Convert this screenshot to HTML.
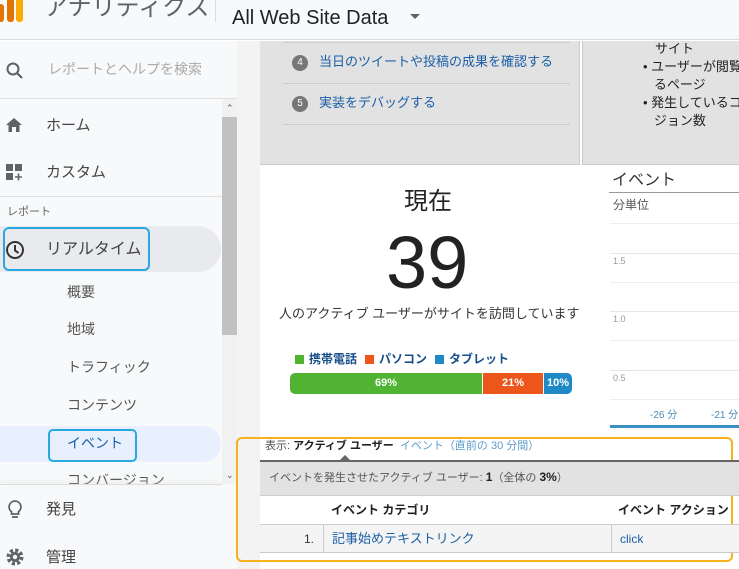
<!DOCTYPE html>
<html><head><meta charset="utf-8"><style>
*{margin:0;padding:0;box-sizing:border-box}
body{width:739px;height:569px;overflow:hidden;position:relative;background:#fff;font-family:"Liberation Sans","Noto Sans CJK JP",sans-serif;color:#333;line-height:1.2}
.a{position:absolute;white-space:nowrap}
.nav{font-size:15px;color:#444}
.sub{font-size:14px;color:#555}
.lk{color:#1a5ea8}
</style></head><body>
<div class="a" style="left:0;top:0;width:739px;height:40px;background:#f8f9fa;border-bottom:1px solid #dadce0"></div>
<div class="a" style="left:-2px;top:4px;width:6px;height:18px;background:#e37400;border-radius:3px"></div>
<div class="a" style="left:7px;top:-4px;width:7px;height:26px;background:#e37400;border-radius:3px"></div>
<div class="a" style="left:16px;top:-4px;width:7px;height:26px;background:#f9ab00;border-radius:3px"></div>
<div class="a" style="left:44px;top:-6px;font-size:24px;color:#5f6368">アナリティクス</div>
<div class="a" style="left:215px;top:0;width:1px;height:22px;background:#dadce0"></div>
<div class="a" style="left:232px;top:6px;font-size:20px;color:#202124">All Web Site Data</div>
<div class="a" style="left:410px;top:14px;width:0;height:0;border-left:5px solid transparent;border-right:5px solid transparent;border-top:5px solid #5f6368"></div>

<div class="a" style="left:0;top:41px;width:237px;height:528px;background:#f8f9fa"></div>
<svg class="a" style="left:5px;top:61px" width="20" height="20" viewBox="0 0 20 20"><circle cx="8" cy="8" r="5.5" fill="none" stroke="#5f6368" stroke-width="2"/><line x1="12" y1="12" x2="17" y2="17" stroke="#5f6368" stroke-width="2.2"/></svg>
<div class="a" style="left:48px;top:61px;font-size:14px;color:#aaa">レポートとヘルプを検索</div>
<div class="a" style="left:0;top:98px;width:237px;height:1px;background:#e0e0e0"></div>
<div class="a" style="left:222px;top:99px;width:15px;height:385px;background:#f1f1f1"></div>
<div class="a" style="left:222px;top:117px;width:15px;height:218px;background:#c1c1c1"></div>
<div class="a" style="left:226px;top:103px;font-size:9px;color:#555">&#8963;</div>
<div class="a" style="left:226px;top:470px;font-size:9px;color:#555">&#8964;</div>

<svg class="a" style="left:5px;top:117px" width="18" height="16" viewBox="0 0 18 16"><path d="M9 1 L1 8 H3.5 V15 H7 V10 H11 V15 H14.5 V8 H17 Z" fill="#5f6368"/></svg>
<div class="a nav" style="left:46px;top:117px">ホーム</div>
<svg class="a" style="left:6px;top:164px" width="18" height="18" viewBox="0 0 18 18"><rect x="0" y="0" width="7" height="7" fill="#5f6368"/><rect x="9" y="0" width="7" height="7" fill="#5f6368"/><rect x="0" y="9" width="7" height="7" fill="#5f6368"/><path d="M12.5 9.5v7M9 13h7" stroke="#5f6368" stroke-width="1.6"/></svg>
<div class="a nav" style="left:46px;top:164px">カスタム</div>
<div class="a" style="left:0;top:196px;width:222px;height:1px;background:#e0e0e0"></div>
<div class="a" style="left:7px;top:206px;font-size:11px;color:#666">レポート</div>
<div class="a" style="left:0;top:226px;width:221px;height:46px;background:#e8eaed;border-radius:0 23px 23px 0"></div>
<div class="a" style="left:3px;top:227px;width:147px;height:44px;border:2px solid #29a8e0;border-radius:6px"></div>
<svg class="a" style="left:5px;top:240px" width="20" height="20" viewBox="0 0 20 20"><circle cx="10" cy="10" r="8" fill="none" stroke="#333" stroke-width="2"/><path d="M10 5v5.5l3.5 2.5" fill="none" stroke="#333" stroke-width="2"/></svg>
<div class="a nav" style="left:46px;top:240px;font-size:16px">リアルタイム</div>
<div class="a sub" style="left:67px;top:284px">概要</div>
<div class="a sub" style="left:67px;top:321px">地域</div>
<div class="a sub" style="left:67px;top:359px">トラフィック</div>
<div class="a sub" style="left:67px;top:397px">コンテンツ</div>
<div class="a" style="left:0;top:426px;width:221px;height:36px;background:#e8f0fe;border-radius:0 18px 18px 0"></div>
<div class="a" style="left:48px;top:429px;width:89px;height:33px;border:2px solid #29a8e0;border-radius:5px"></div>
<div class="a sub" style="left:67px;top:435px;color:#1a5ea8">イベント</div>
<div class="a" style="left:0;top:462px;width:222px;height:22px;overflow:hidden"><div class="a sub" style="left:67px;top:10px">コンバージョン</div></div>
<div class="a" style="left:0;top:484px;width:222px;height:1px;background:#ddd;box-shadow:0 -2px 3px #ddd"></div>
<svg class="a" style="left:6px;top:499px" width="18" height="22" viewBox="0 0 18 22"><path d="M9 2a6 6 0 0 0-3.5 10.8V15h7v-2.2A6 6 0 0 0 9 2z" fill="none" stroke="#5f6368" stroke-width="1.8"/><path d="M6 18h6" stroke="#5f6368" stroke-width="1.8"/></svg>
<div class="a nav" style="left:46px;top:501px">発見</div>
<svg class="a" style="left:5px;top:547px" width="20" height="20" viewBox="0 0 20 20"><circle cx="10" cy="10" r="6.5" fill="none" stroke="#5f6368" stroke-width="4" stroke-dasharray="3 2.1"/><circle cx="10" cy="10" r="5" fill="#5f6368"/><circle cx="10" cy="10" r="2.2" fill="#f8f9fa"/></svg>
<div class="a nav" style="left:46px;top:549px">管理</div>

<div class="a" style="left:237px;top:41px;width:23px;height:528px;background:#f3f3f3"></div>
<div class="a" style="left:260px;top:41px;width:320px;height:124px;background:#e2e2e2;border-right:1px solid #ccc;border-bottom:1px solid #ccc"></div>
<div class="a" style="left:283px;top:42px;width:287px;height:1px;background:#ccc"></div>
<div class="a" style="left:292px;top:55px;width:16px;height:16px;border-radius:8px;background:#777;color:#fff;font-size:10px;text-align:center;line-height:16px">4</div>
<div class="a lk" style="left:319px;top:54px;font-size:13px">当日のツイートや投稿の成果を確認する</div>
<div class="a" style="left:283px;top:83px;width:287px;height:1px;background:#ccc"></div>
<div class="a" style="left:292px;top:96px;width:16px;height:16px;border-radius:8px;background:#777;color:#fff;font-size:10px;text-align:center;line-height:16px">5</div>
<div class="a lk" style="left:319px;top:95px;font-size:13px">実装をデバッグする</div>
<div class="a" style="left:283px;top:124px;width:287px;height:1px;background:#ccc"></div>
<div class="a" style="left:582px;top:41px;width:157px;height:124px;background:#e2e2e2;border-left:1px solid #ccc;border-bottom:1px solid #ccc"></div>
<div class="a" style="left:655px;top:40px;font-size:13px;line-height:18px;color:#222">サイト</div>
<div class="a" style="left:643px;top:58px;font-size:13px;line-height:18px;color:#222">• ユーザーが閲覧<br>&nbsp;&nbsp;&nbsp;るページ<br>• 発生しているコ<br>&nbsp;&nbsp;&nbsp;ジョン数</div>

<div class="a" style="left:404px;top:188px;font-size:24px;color:#222">現在</div>
<div class="a" style="left:386px;top:219px;font-size:74px;color:#222;font-weight:300">39</div>
<div class="a" style="left:279px;top:306px;font-size:13px;color:#333">人のアクティブ ユーザーがサイトを訪問しています</div>
<div class="a" style="left:295px;top:355px;width:9px;height:9px;background:#50b432"></div>
<div class="a" style="left:309px;top:352px;font-size:12px;color:#1a4e8a;font-weight:bold">携帯電話</div>
<div class="a" style="left:365px;top:355px;width:9px;height:9px;background:#ed561b"></div>
<div class="a" style="left:379px;top:352px;font-size:12px;color:#1a4e8a;font-weight:bold">パソコン</div>
<div class="a" style="left:435px;top:355px;width:9px;height:9px;background:#1f8ac6"></div>
<div class="a" style="left:449px;top:352px;font-size:12px;color:#1a4e8a;font-weight:bold">タブレット</div>
<div class="a" style="left:290px;top:373px;width:282px;height:21px;border-radius:5px;overflow:hidden;font-size:11px;font-weight:bold;color:#fff;text-align:center;line-height:21px">
<div class="a" style="left:0;top:0;width:192px;height:21px;background:#50b432">69%</div>
<div class="a" style="left:193px;top:0;width:60px;height:21px;background:#ed561b">21%</div>
<div class="a" style="left:254px;top:0;width:28px;height:21px;background:#1f8ac6">10%</div>
</div>

<div class="a" style="left:612px;top:171px;font-size:16px;color:#333">イベント</div>
<div class="a" style="left:609px;top:192px;width:130px;height:1px;background:#999"></div>
<div class="a" style="left:613px;top:198px;font-size:12px;color:#555">分単位</div>
<div class="a" style="left:610px;top:223px;width:129px;height:1px;background:#eee"></div>
<div class="a" style="left:610px;top:253px;width:129px;height:1px;background:#e6e6e6"></div>
<div class="a" style="left:613px;top:256px;font-size:9px;color:#999">1.5</div>
<div class="a" style="left:610px;top:282px;width:129px;height:1px;background:#eee"></div>
<div class="a" style="left:610px;top:311px;width:129px;height:1px;background:#e6e6e6"></div>
<div class="a" style="left:613px;top:314px;font-size:9px;color:#999">1.0</div>
<div class="a" style="left:610px;top:340px;width:129px;height:1px;background:#eee"></div>
<div class="a" style="left:610px;top:370px;width:129px;height:1px;background:#e6e6e6"></div>
<div class="a" style="left:613px;top:373px;font-size:9px;color:#999">0.5</div>
<div class="a" style="left:610px;top:399px;width:129px;height:1px;background:#eee"></div>
<div class="a" style="left:650px;top:410px;font-size:10px;color:#4a8ab5">-26 分</div>
<div class="a" style="left:711px;top:410px;font-size:10px;color:#4a8ab5">-21 分</div>
<div class="a" style="left:610px;top:425px;width:129px;height:3px;background:#3b8fc2"></div>

<div class="a" style="left:236px;top:437px;width:497px;height:125px;border:2px solid #f5b21e;border-radius:6px"></div>
<div class="a" style="left:265px;top:440px;font-size:11px;color:#555">表示: <b style="color:#222">アクティブ ユーザー</b>&nbsp;&nbsp;<span style="color:#5b9bc8">イベント（直前の 30 分間）</span></div>
<div class="a" style="left:340px;top:455px;width:0;height:0;border-left:5px solid transparent;border-right:5px solid transparent;border-bottom:5px solid #666"></div>
<div class="a" style="left:260px;top:460px;width:479px;height:2px;background:#666"></div>
<div class="a" style="left:260px;top:462px;width:479px;height:34px;background:#e2e2e2;border-bottom:1px solid #ccc"></div>
<div class="a" style="left:269px;top:470px;font-size:11px;color:#555">イベントを発生させたアクティブ ユーザー: <b style="color:#222;font-size:12px">1</b>（全体の <b style="color:#222;font-size:12px">3%</b>）</div>
<div class="a" style="left:331px;top:503px;font-size:12px;font-weight:bold;color:#222">イベント カテゴリ</div>
<div class="a" style="left:618px;top:503px;font-size:12px;font-weight:bold;color:#222">イベント アクション</div>
<div class="a" style="left:260px;top:524px;width:479px;height:1px;background:#ccc"></div>
<div class="a" style="left:260px;top:525px;width:479px;height:28px;background:#f4f4f4;border-bottom:1px solid #ccc"></div>
<div class="a" style="left:323px;top:525px;width:1px;height:28px;background:#ccc"></div>
<div class="a" style="left:611px;top:525px;width:1px;height:28px;background:#ccc"></div>
<div class="a" style="left:304px;top:532px;font-size:12px;color:#333">1.</div>
<div class="a lk" style="left:332px;top:531px;font-size:13px">記事始めテキストリンク</div>
<div class="a lk" style="left:620px;top:532px;font-size:12px">click</div>
</body></html>
